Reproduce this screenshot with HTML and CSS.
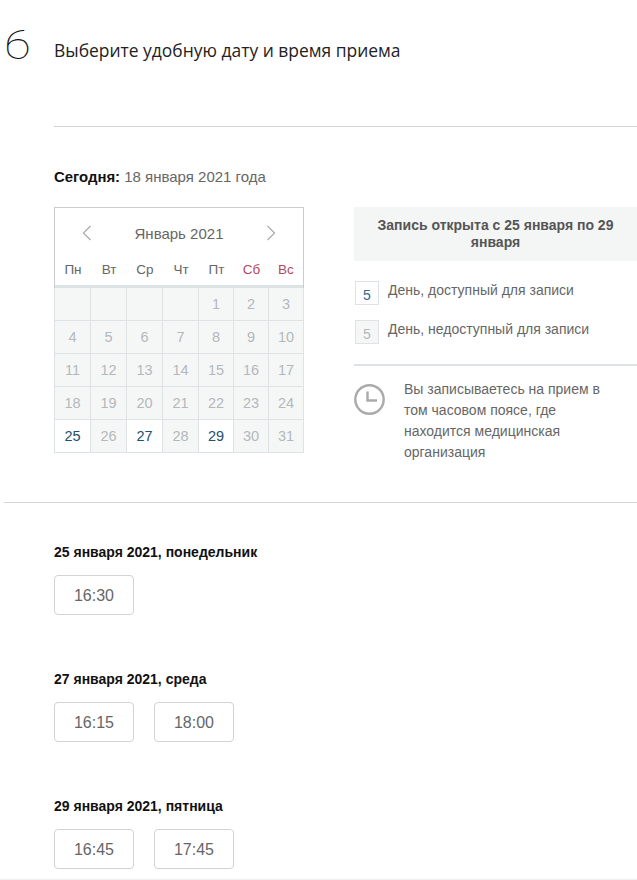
FILE: index.html
```html
<!DOCTYPE html>
<html lang="ru">
<head>
  <meta charset="UTF-8" />
  <title>Выбор даты и времени приема</title>
  <link rel="stylesheet" href="styles.css">
</head>
<body>
  <div class="page">
    <div class="step-head">
      <span class="step-num"><span class="step-digit">6</span></span>
      <h2 class="step-title">Выберите удобную дату и время приема</h2>
    </div>

    <div class="calendar-block">
      <p class="today"><strong>Сегодня:</strong> 18 января 2021 года</p>

      <div class="row">
        <div class="calendar">
          <div class="cal-head">
            <svg class="arrow" width="10" height="16" viewBox="0 0 10 16"><path d="M8.5 1 1.5 8l7 7" /></svg>
            <span class="cal-month">Январь 2021</span>
            <svg class="arrow" width="10" height="16" viewBox="0 0 10 16"><path d="M1.5 1l7 7-7 7" /></svg>
          </div>
          <div class="weekdays">
            <span>Пн</span><span>Вт</span><span>Ср</span><span>Чт</span><span>Пт</span>
            <span class="red">Сб</span><span class="red">Вс</span>
          </div>
          <div class="days">
            <span></span><span></span><span></span><span></span><span>1</span><span>2</span><span>3</span>
            <span>4</span><span>5</span><span>6</span><span>7</span><span>8</span><span>9</span><span>10</span>
            <span>11</span><span>12</span><span>13</span><span>14</span><span>15</span><span>16</span><span>17</span>
            <span>18</span><span>19</span><span>20</span><span>21</span><span>22</span><span>23</span><span>24</span>
            <span class="open">25</span><span>26</span><span class="open">27</span><span>28</span><span class="open">29</span><span>30</span><span>31</span>
          </div>
        </div>

        <div class="side">
          <div class="notice">Запись открыта с 25 января по 29 января</div>
          <div class="legend">
            <span class="legend-box open-box">5</span>
            <span class="legend-text">День, доступный для записи</span>
          </div>
          <div class="legend">
            <span class="legend-box closed-box">5</span>
            <span class="legend-text">День, недоступный для записи</span>
          </div>
          <div class="tz">
            <svg class="clock" width="31" height="31" viewBox="0 0 31 31">
              <circle cx="15.5" cy="15.5" r="14.2" />
              <path d="M13.5 7.5v9h9.5" />
            </svg>
            <p>Вы записываетесь на прием в том часовом поясе, где находится медицинская организация</p>
          </div>
        </div>
      </div>
    </div>

    <div class="slots">
      <div class="slot-day">
        <h3>25 января 2021, понедельник</h3>
        <div class="times">
          <button>16:30</button>
        </div>
      </div>
      <div class="slot-day">
        <h3>27 января 2021, среда</h3>
        <div class="times">
          <button>16:15</button>
          <button>18:00</button>
        </div>
      </div>
      <div class="slot-day">
        <h3>29 января 2021, пятница</h3>
        <div class="times">
          <button>16:45</button>
          <button>17:45</button>
        </div>
      </div>
    </div>
  </div>
</body>
</html>
```

FILE: styles.css
```css
* {
  box-sizing: border-box;
  margin: 0;
  padding: 0;
}

body {
  font-family: 'Liberation Sans', Arial, sans-serif;
  background: #fff;
  color: #555;
}

.page {
  height: 880px;
  overflow: hidden;
  border-bottom: 1px solid #eee;
}

.step-head {
  display: flex;
  align-items: flex-start;
  height: 126px;
  padding: 20px 0 0 4px;
}

.step-num {
  width: 50px;
  font-family: 'Roboto', sans-serif;
  font-weight: 100;
  font-size: 41px;
  line-height: 50px;
  color: #111;
}

.step-digit {
  display: inline-block;
  transform: scaleX(1.2);
  transform-origin: left center;
}

.step-title {
  font-family: 'Open Sans', sans-serif;
  font-weight: 400;
  font-size: 17.45px;
  line-height: 24px;
  margin-top: 18px;
  color: #222;
}

.calendar-block {
  margin-left: 54px;
  border-top: 1px solid #d3d3d3;
  padding-top: 42px;
  height: 376px;
}

.today {
  font-size: 15px;
  line-height: 16px;
  color: #666;
  margin-bottom: 22px;
}

.today strong {
  color: #111;
  font-size: 14.9px;
}

.row {
  display: flex;
  gap: 50px;
}

.calendar {
  width: 250px;
  height: 246px;
  border: 1px solid #ccc;
  border-bottom: 0;
}

.cal-head {
  display: flex;
  align-items: center;
  justify-content: space-between;
  height: 50px;
  padding: 0 27px;
}

.cal-month {
  font-size: 15px;
  color: #666;
}

.arrow {
  fill: none;
  stroke: #aaa;
  stroke-width: 1.2;
}

.weekdays {
  display: grid;
  grid-template-columns: 36px 36px 36px 36px 35px 35px 1fr;
  height: 30px;
  padding-top: 4px;
  border-bottom: 3px solid #dde3e5;
  font-size: 13.5px;
  text-align: center;
  color: #666;
}

.weekdays .red {
  color: #b5475c;
}

.days {
  display: grid;
  grid-template-columns: 37px 36px 36px 36px 35px 35px 1fr;
  grid-auto-rows: 33px;
  margin-left: -1px;
  width: 250px;
}

.days span {
  display: flex;
  align-items: center;
  justify-content: center;
  background: #f5f7f7;
  border-right: 1px solid #dde3e5;
  border-bottom: 1px solid #dde3e5;
  font-size: 14.5px;
  color: #b3b8ba;
}

.days span:nth-child(7n+1) {
  border-left: 1px solid #dde3e5;
}

.days .open {
  background: #fff;
  color: #22506f;
}

.side {
  width: 283px;
}

.notice {
  height: 54px;
  margin-bottom: 20px;
  padding: 10px 20px 0;
  background: #f4f6f6;
  font-size: 14px;
  font-weight: bold;
  line-height: 17px;
  text-align: center;
  color: #555;
}

.legend {
  display: flex;
  align-items: flex-start;
  height: 39px;
  font-size: 14px;
  line-height: 16px;
  color: #666;
}

.legend-box {
  width: 24px;
  height: 24px;
  margin: 0 9px 0 1px;
  border: 1px solid #dde3e5;
  text-align: center;
  font-size: 14px;
  line-height: 26px;
  color: #2f6a93;
}

.legend-box.closed-box {
  background: #f5f7f7;
  color: #b3b8ba;
}

.legend-text {
  padding-top: 1px;
}

.tz {
  display: flex;
  border-top: 2px solid #dde3e5;
  margin-top: 5px;
  padding-top: 13px;
}

.clock {
  flex: none;
  margin: 5px 19px 0 0;
  fill: none;
  stroke: #aaa;
  stroke-width: 2.4;
}

.tz p {
  width: 205px;
  font-size: 14px;
  line-height: 21px;
  color: #666;
}

.slots {
  margin-left: 4px;
  border-top: 1px solid #d3d3d3;
  padding: 42px 0 0 50px;
}

.slot-day {
  height: 127px;
}

.slot-day h3 {
  font-size: 14px;
  font-weight: bold;
  line-height: 15px;
  color: #111;
  margin-bottom: 15px;
}

.times {
  display: flex;
  gap: 20px;
}

.times button {
  width: 80px;
  height: 40px;
  padding-top: 2px;
  font-family: inherit;
  font-size: 16px;
  color: #666;
  background: #fff;
  border: 1px solid #d3d3d3;
  border-radius: 4px;
}
```
